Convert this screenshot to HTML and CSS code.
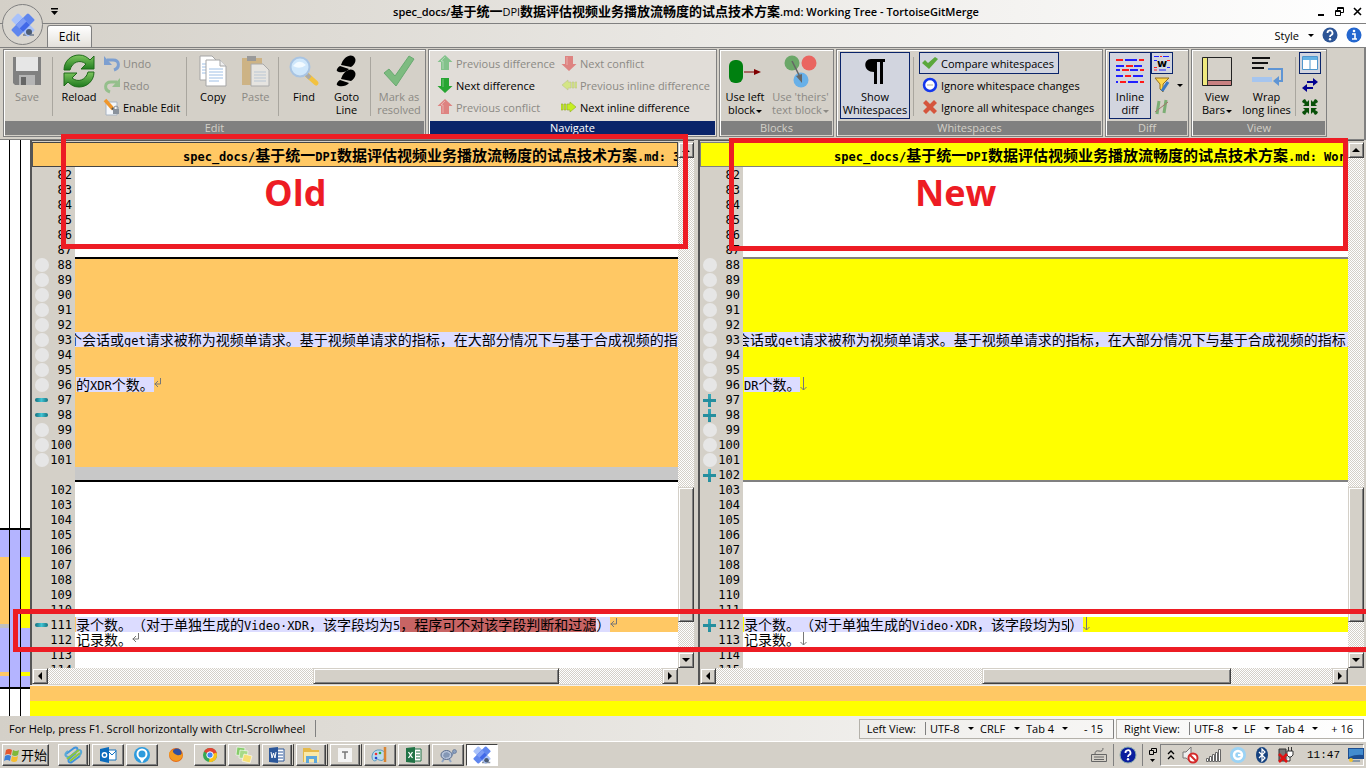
FILE: index.html
```html
<!DOCTYPE html>
<html lang="zh-CN">
<head>
<meta charset="utf-8">
<title>TortoiseGitMerge</title>
<link rel="stylesheet" href="styles.css">
</head>
<body>
<svg class="defs" aria-hidden="true">
  <defs>
    <linearGradient id="green" x1="0" y1="0" x2="0" y2="1"><stop offset="0" stop-color="#7fc65f"/><stop offset="1" stop-color="#1d7a1d"/></linearGradient>
    <symbol id="logo" viewBox="0 0 24 24">
      <circle cx="17" cy="19" r="4" fill="#59687c"/><path d="M12 21h11v2H12z" fill="#8791a0"/>
      <rect x="7" y="0" width="10" height="24" rx="1.500" fill="#5f86ee" transform="rotate(45 12 12)"/>
      <rect x="7" y="0" width="10" height="24" rx="1.500" fill="#a9c2fa" transform="rotate(-45 12 12)"/>
      <path d="M12 5l7 7-7 7-7-7z" fill="#4169e8"/><path d="M12 5l3.500 3.500-7 7L5 12z" fill="#7e9df4"/>
      <circle cx="18" cy="19" r="3" fill="#4c5c74"/>
    </symbol>
    <symbol id="up" viewBox="0 0 16 16"><path d="M8 0l7.500 7H12v8H4V7H.500z" fill="currentColor"/><path d="M8 2L4 6h2v8" fill="none" stroke="#fff" opacity=".35"/></symbol>
    <symbol id="down" viewBox="0 0 16 16"><path d="M8 16L.500 9H4V1h8v8h3.500z" fill="currentColor"/><path d="M6 2v8" fill="none" stroke="#fff" opacity=".35"/></symbol>
    <symbol id="next" viewBox="0 0 16 16"><path d="M0 5h2v6H0zM3 5h2v6H3zM6 5h3V3l6 5-6 5v-2H6z" fill="#c5ef22" stroke="#90a92c" stroke-width=".6"/></symbol>
    <symbol id="page" viewBox="0 0 32 32">
      <path d="M3 1h12l5 5v19H3z" fill="#fff" stroke="#a5a5a5"/><path d="M5 9h8M5 12h8M5 15h8M5 18h8" stroke="#9fc0e6"/>
      <path d="M9 5h14l6 6v20H9z" fill="#fff" stroke="#a5a5a5"/><path d="M23 5v6h6" fill="#eee" stroke="#a5a5a5"/><path d="M12 14h14M12 17h14M12 20h14M12 23h14M12 26h10" stroke="#9fc0e6"/>
    </symbol>
  </defs>
</svg>

<div class="app">
  <header class="titlebar">
    <button class="quick" aria-label="Customize toolbar"><svg width="7" height="8" viewBox="0 0 7 8"><path d="M0 0h7v1.500H0zM0 3h7L3.500 7z"/></svg></button>
    <h1><span class="lat">spec_docs/</span>基于统一<span class="lat thin">DPI</span>数据评估视频业务播放流畅度的试点技术方案<span class="lat">.md: Working Tree - TortoiseGitMerge</span></h1>
    <div class="winbtns">
      <button aria-label="Minimize"><svg width="9" height="9"><path d="M1 7h6v2H1z"/></svg></button>
      <button aria-label="Restore"><svg width="9" height="9" fill="none" stroke="#000"><path d="M2.500 3V.500h6v5H6M2.500 1.500h6M.500 3.500h5v5h-5zM.500 4.500h5"/></svg></button>
      <button aria-label="Close"><svg width="9" height="9" stroke="#000" stroke-width="1.600"><path d="M1 1l7 7M8 1L1 8"/></svg></button>
    </div>
  </header>
  <nav class="tabs">
    <button class="tab">Edit</button>
    <div class="tabtools">
      <button class="style">Style<i class="caret"></i></button>
      <button aria-label="Help"><svg width="16" height="16"><circle cx="8" cy="8" r="7.500" fill="#2d5596"/><path d="M5.500 6a2.500 2.500 0 1 1 3.500 2.200q-1 .5-1 1.800" fill="none" stroke="#fff" stroke-width="1.800"/><circle cx="8" cy="12.300" r="1.200" fill="#fff"/></svg></button>
      <button aria-label="About"><svg width="16" height="16"><circle cx="8" cy="8" r="7.500" fill="#2467cf"/><path d="M6 7h3v5M6 12h5" fill="none" stroke="#fff" stroke-width="1.600"/><circle cx="8" cy="4" r="1.300" fill="#fff"/></svg></button>
    </div>
  </nav>
  <button class="orb" aria-label="Application menu"><svg width="24" height="24"><use href="#logo"/></svg></button>

  <section class="ribbon">
    <div class="group">
      <div class="tools">
        <button class="big w44" disabled><svg width="32" height="32"><path d="M2 2h28v28H4l-2-2z" fill="#808080"/><path d="M5 2h22v14H5z" fill="#e6e6e6"/><path d="M8 20h16v10H8z" fill="#b5b5b5"/><path d="M10 22h5v8h-5z" fill="#666"/></svg>Save</button>
        <i class="sep"></i>
        <button class="big w46"><svg width="32" height="32"><path d="M1 15C1 6 8 0 16 0c5 0 8 2 11 5l4-4v13H18l5-5c-6-5-14-2-16 6z" fill="url(#green)" stroke="#1f6b1a"/><path d="M31 17c0 9-7 15-15 15-5 0-8-2-11-5l-4 4V18h13l-5 5c6 5 14 2 16-6z" fill="url(#green)" stroke="#1f6b1a"/></svg>Reload</button>
        <div class="stack w81">
          <button disabled><svg width="16" height="16"><path d="M3 5h6c7 0 7 8 1 10" fill="none" stroke="#7d9fd0" stroke-width="3"/><path d="M0 1v9h8z" fill="#7d9fd0"/></svg>Undo</button>
          <button disabled><svg width="16" height="16"><path d="M13 5H7C0 5 0 13 6 15" fill="none" stroke="#95bf8c" stroke-width="3"/><path d="M16 1v9H8z" fill="#95bf8c"/></svg>Redo</button>
          <button><svg width="16" height="16"><path d="M2 3h11v13H2z" fill="#f4f7fb" stroke="#a9b4c2"/><path d="M1 1l8 9" stroke="#ef962a" stroke-width="3.500"/><path d="M8 9l3 3" stroke="#555" stroke-width="2"/><rect x="9" y="10" width="6" height="5" fill="#8a929c"/><path d="M10 10V8q2-2 4 0v2" fill="none" stroke="#8a929c"/></svg>Enable Edit</button>
        </div>
        <i class="sep"></i>
        <button class="big w46"><svg width="32" height="32"><use href="#page"/></svg>Copy</button>
        <button class="big w39" disabled><svg width="32" height="32"><path d="M2 3h20v27H2z" fill="#cdb385"/><path d="M7 1h9v5H7z" fill="#999"/><path d="M11 9h12l6 6v16H11z" fill="#e6e4e0" stroke="#aaa"/><path d="M14 17h12M14 20h12M14 23h12M14 26h12" stroke="#b9c6d4"/></svg>Paste</button>
        <i class="sep"></i>
        <button class="big w44"><svg width="32" height="32"><path d="M19 20l9 8" stroke="#f2c240" stroke-width="5" stroke-linecap="round"/><path d="M18 19l4 4" stroke="#aaa" stroke-width="4"/><circle cx="12" cy="12" r="9.500" fill="#cfe7fb" stroke="#a9c4e2" stroke-width="2"/><path d="M5 11q6-8 13-1-6 5-13 1z" fill="#f2faff"/></svg>Find</button>
        <button class="big w41"><svg width="32" height="32"><path d="M10 10C12 3 18-1 22 1c4 2 3 8-2 11z"/><path d="M9 11l9 3c-3 4-10 4-12 2-1-1 1-4 3-5z"/><path d="M10 24c2-7 8-11 12-9 4 2 3 8-2 11z"/><path d="M9 25l9 3c-3 4-10 4-12 2-1-1 1-4 3-5z"/></svg><span>Goto</span><span>Line</span></button>
        <i class="sep"></i>
        <button class="big w50" disabled><svg width="32" height="32"><path d="M1 18l5-4 6 7L26 1l5 3-18 27z" fill="#7dbb80" stroke="#68aa70"/></svg><span>Mark as</span><span>resolved</span></button>
      </div>
      <div class="caption">Edit</div>
    </div>

    <div class="group hot">
      <div class="tools nav">
        <div class="stack w124">
          <button disabled><svg class="lgreen" width="16" height="16"><use href="#up"/></svg>Previous difference</button>
          <button><svg class="green" width="16" height="16"><use href="#down"/></svg>Next difference</button>
          <button disabled><svg class="lred" width="16" height="16"><use href="#up"/></svg>Previous conflict</button>
        </div>
        <div class="stack w156">
          <button disabled><svg class="lred" width="16" height="16"><use href="#down"/></svg>Next conflict</button>
          <button disabled><svg class="faint flip" width="16" height="16"><use href="#next"/></svg>Previous inline difference</button>
          <button><svg width="16" height="16"><use href="#next"/></svg>Next inline difference</button>
        </div>
      </div>
      <div class="caption">Navigate</div>
    </div>

    <div class="group">
      <div class="tools">
        <button class="big w48"><svg width="32" height="32"><rect x="0" y="5" width="14" height="23" rx="6" fill="#008010"/><path d="M15 17h12" stroke="#800000"/><path d="M25 14l7 3-7 3z" fill="#800000"/></svg><span>Use left</span><span>block<i class="caret"></i></span></button>
        <button class="big w63" disabled><svg width="32" height="32"><circle cx="7" cy="8" r="7.500" fill="#6ba768"/><circle cx="24" cy="8" r="7.500" fill="#ea6560"/><circle cx="16" cy="25" r="7.500" fill="#68b0e8"/><path d="M7 6l9 18" stroke="#666" stroke-width="1.500"/><path d="M17 28l-6-7 6-2z" fill="#666"/></svg><span>Use 'theirs'</span><span>text block<i class="caret"></i></span></button>
      </div>
      <div class="caption">Blocks</div>
    </div>

    <div class="group">
      <div class="tools ws">
        <button class="big w70 on"><svg width="32" height="32"><path d="M12 4h14v3h-2v22h-3V7h-3v22h-3V17C4 17 4 4 12 4z"/></svg><span>Show</span><span>Whitespaces</span></button>
        <i class="sep"></i>
        <div class="stack framed">
          <button class="on"><svg width="16" height="16"><path d="M0 8l3-3 3 3 7-6 3 2-9 10z" fill="#5ba83c"/></svg>Compare whitespaces</button>
          <button><svg width="16" height="16"><circle cx="8" cy="8" r="6" fill="#fff" stroke="#1437ec" stroke-width="2.500"/><path d="M5 8h6" stroke="#d9d4cd" stroke-width="2"/></svg>Ignore whitespace changes</button>
          <button><svg width="16" height="16"><path d="M1 4l3-3 4 4 4-4 3 3-4 4 4 4-3 3-4-4-4 4-3-3 4-4z" fill="#d5553d"/></svg>Ignore all whitespace changes</button>
        </div>
      </div>
      <div class="caption">Whitespaces</div>
    </div>

    <div class="group">
      <div class="tools ws">
        <button class="big w42 on"><svg width="32" height="32" stroke-width="2"><path d="M11 5h12M2 11h8M20 11h8M2 15h4M16 15h8M2 21h7M19 21h10M2 27h2M14 27h10" stroke="#2020ff"/><path d="M2 5h7M25 5h5M12 11h7M8 15h7M26 15h4M11 21h6M6 27h6M26 27h4" stroke="#ff1a1a"/></svg><span>Inline</span><span>diff</span></button>
        <div class="stack minis w36">
          <button class="on" aria-label="Inline diff word-wise"><svg width="16" height="16"><path d="M0 1.500h5M9 1.500h6M0 5.500h3M13 12.500h3M5 15h7" stroke="#22f"/><path d="M6 1.500h2M0 12.500h3M13 5.500h3M0 15h3" stroke="#f22"/><text x="8" y="12" text-anchor="middle" class="wglyph">w</text></svg></button>
          <button aria-label="Filter"><svg width="16" height="16"><path d="M1 1h14L9 7v8l-3-3V7z" fill="#ffd84d" stroke="#96711c"/><path d="M14 5l-6 9" stroke="#3b79c5" stroke-width="3"/></svg><i class="caret"></i></button>
          <button aria-label="Moved lines"><svg width="16" height="16"><path d="M5 2L3 15M12 1l-2 13" stroke="#7bae74" stroke-width="3"/><path d="M1 13L14 3" stroke="#a3766d"/></svg></button>
        </div>
      </div>
      <div class="caption">Diff</div>
    </div>

    <div class="group">
      <div class="tools">
        <button class="big w48"><svg width="32" height="32"><path d="M1.500 2.500h29v28h-29z" fill="#d5d1c9" stroke="#222"/><path d="M2 3h4v27H2z" fill="#efe97e"/><path d="M6.500 3v27M7 25.500h23" stroke="#333"/><path d="M7 26h23v4H7z" fill="#c88080"/></svg><span>View</span><span>Bars<i class="caret"></i></span></button>
        <button class="big w51"><svg width="32" height="32"><path d="M1 3h18M1 8h16M1 13h12" stroke="#111" stroke-width="2"/><path d="M17 14h14v12h-6" fill="none" stroke="#5f95d4" stroke-width="2"/><path d="M28 21v10l-6-5z" fill="#5f95d4"/><path d="M1 22h20v5H1z" fill="#a6c5ee"/></svg><span>Wrap</span><span>long lines</span></button>
        <i class="sep"></i>
        <div class="stack minis w26">
          <button class="on" aria-label="Two panes"><svg width="16" height="16"><path d="M.500 1.500h15v13H.500z" fill="#fff" stroke="#4f96cc"/><path d="M1 2h14v3H1z" fill="#64b2e4"/><path d="M8 5v10" stroke="#4f96cc"/></svg></button>
          <button aria-label="Switch views"><svg width="16" height="16"><path d="M5 4h6V1l5 4-5 4V6H5zM11 10H5V7l-5 4 5 4v-3h6z" fill="#000090"/></svg></button>
          <button aria-label="Collapse"><svg width="16" height="16"><path d="M1 1l2-1 2 3 2-2v6H1l2-2-3-2zM15 1l-2-1-2 3-2-2v6h6l-2-2 3-2zM1 15l2 1 2-3 2 2V9H1l2 2-3 2zM15 15l-2 1-2-3-2 2V9h6l-2 2 3 2z" fill="#085008"/></svg></button>
        </div>
      </div>
      <div class="caption">View</div>
    </div>
  </section>

  <main class="main">
    <aside class="locator">
      <div class="lane"><i class="g388"></i><i class="g2 k"></i><i class="g27 p"></i><i class="g67 o"></i><i class="g4 gy"></i><i class="g44 p"></i><i class="g4 o"></i><i class="g11 p"></i><i class="g2 k"></i><i class="g27"></i></div>
      <div class="lane"><i class="g388"></i><i class="g2 k"></i><i class="g157 p"></i><i class="g2 k"></i><i class="g27"></i></div>
      <div class="lane"><i class="g388"></i><i class="g2 k"></i><i class="g27 p"></i><i class="g71 y"></i><i class="g44 p"></i><i class="g4 y"></i><i class="g11 p"></i><i class="g2 k"></i><i class="g27"></i></div>
    </aside>
    <div class="work">
      <div class="panes">
        <section class="pane left">
          <h2><span>spec_docs/</span>基于统一<span>DPI</span>数据评估视频业务播放流畅度的试点技术方案<span>.md: 3</span></h2>
          <div class="lines">
            <div class="row"><b>82</b><code></code></div>
            <div class="row"><b>83</b><code></code></div>
            <div class="row"><b>84</b><code></code></div>
            <div class="row"><b>85</b><code></code></div>
            <div class="row"><b>86</b><code></code></div>
            <div class="row"><b>87</b><code></code></div>
            <div class="row same old first"><b>88</b><code></code></div>
            <div class="row same old"><b>89</b><code></code></div>
            <div class="row same old"><b>90</b><code></code></div>
            <div class="row same old"><b>91</b><code></code></div>
            <div class="row same old"><b>92</b><code></code></div>
            <div class="row same old"><b>93</b><code><mark class="cut">个会话或<span>get</span>请求被称为视频单请求。基于视频单请求的指标，在大部分情况下与基于合成视频的指</mark></code></div>
            <div class="row same old"><b>94</b><code></code></div>
            <div class="row same old"><b>95</b><code></code></div>
            <div class="row same old"><b>96</b><code><mark>的<span>XDR</span>个数。</mark><svg class="eol" width="8" height="12"><path d="M6.500 1v6h-6M4 4L1 7l3 3"/></svg></code></div>
            <div class="row minus old"><b>97</b><code></code></div>
            <div class="row minus old"><b>98</b><code></code></div>
            <div class="row same old"><b>99</b><code></code></div>
            <div class="row same old"><b>100</b><code></code></div>
            <div class="row same old"><b>101</b><code></code></div>
            <div class="row gap last"><b></b><code></code></div>
            <div class="row"><b>102</b><code></code></div>
            <div class="row"><b>103</b><code></code></div>
            <div class="row"><b>104</b><code></code></div>
            <div class="row"><b>105</b><code></code></div>
            <div class="row"><b>106</b><code></code></div>
            <div class="row"><b>107</b><code></code></div>
            <div class="row"><b>108</b><code></code></div>
            <div class="row"><b>109</b><code></code></div>
            <div class="row"><b>110</b><code></code></div>
            <div class="row minus old"><b>111</b><code><mark>录个数。（对于单独生成的<span>Video·XDR</span>，该字段均为<span>5</span></mark><mark class="del">，程序可不对该字段判断和过滤</mark><mark>）</mark><svg class="eol" width="8" height="12"><path d="M6.500 1v6h-6M4 4L1 7l3 3"/></svg></code></div>
            <div class="row"><b>112</b><code>记录数。<svg class="eol" width="8" height="12"><path d="M6.500 1v6h-6M4 4L1 7l3 3"/></svg></code></div>
            <div class="row"><b>113</b><code></code></div>
            <div class="row"><b>114</b><code></code></div>
          </div>
          <div class="bar v"><button aria-label="Scroll up"><i class="tri u"></i></button><i class="track g330"></i><i class="thumb g134"></i><i class="track g30"></i><button aria-label="Scroll down"><i class="tri d"></i></button></div>
          <div class="bar h"><button aria-label="Scroll left"><i class="tri l"></i></button><i class="track g266"></i><i class="thumb g245"></i><i class="track g103"></i><button aria-label="Scroll right"><i class="tri r"></i></button></div>
        </section>
        <section class="pane right">
          <h2><span>spec_docs/</span>基于统一<span>DPI</span>数据评估视频业务播放流畅度的试点技术方案<span>.md: Wor</span></h2>
          <div class="lines">
            <div class="row"><b>82</b><code></code></div>
            <div class="row"><b>83</b><code></code></div>
            <div class="row"><b>84</b><code></code></div>
            <div class="row"><b>85</b><code></code></div>
            <div class="row"><b>86</b><code></code></div>
            <div class="row"><b>87</b><code></code></div>
            <div class="row same new first"><b>88</b><code></code></div>
            <div class="row same new"><b>89</b><code></code></div>
            <div class="row same new"><b>90</b><code></code></div>
            <div class="row same new"><b>91</b><code></code></div>
            <div class="row same new"><b>92</b><code></code></div>
            <div class="row same new"><b>93</b><code><mark class="cut">会话或<span>get</span>请求被称为视频单请求。基于视频单请求的指标，在大部分情况下与基于合成视频的指标，</mark></code></div>
            <div class="row same new"><b>94</b><code></code></div>
            <div class="row same new"><b>95</b><code></code></div>
            <div class="row same new"><b>96</b><code><mark><span>DR</span>个数。</mark><svg class="eol" width="8" height="15"><path d="M3.500 0v13M.500 10l3 3 3-3"/></svg></code></div>
            <div class="row plus new"><b>97</b><code></code></div>
            <div class="row plus new"><b>98</b><code></code></div>
            <div class="row same new"><b>99</b><code></code></div>
            <div class="row same new"><b>100</b><code></code></div>
            <div class="row same new"><b>101</b><code></code></div>
            <div class="row plus new last"><b>102</b><code></code></div>
            <div class="row"><b>103</b><code></code></div>
            <div class="row"><b>104</b><code></code></div>
            <div class="row"><b>105</b><code></code></div>
            <div class="row"><b>106</b><code></code></div>
            <div class="row"><b>107</b><code></code></div>
            <div class="row"><b>108</b><code></code></div>
            <div class="row"><b>109</b><code></code></div>
            <div class="row"><b>110</b><code></code></div>
            <div class="row"><b>111</b><code></code></div>
            <div class="row plus new"><b>112</b><code><mark>录个数。（对于单独生成的<span>Video·XDR</span>，该字段均为<span class="cursor">5</span>）</mark><svg class="eol" width="8" height="15"><path d="M3.500 0v13M.500 10l3 3 3-3"/></svg></code></div>
            <div class="row"><b>113</b><code>记录数。<svg class="eol" width="8" height="15"><path d="M3.500 0v13M.500 10l3 3 3-3"/></svg></code></div>
            <div class="row"><b>114</b><code></code></div>
            <div class="row"><b>115</b><code></code></div>
          </div>
          <div class="bar v"><button aria-label="Scroll up"><i class="tri u"></i></button><i class="track g330"></i><i class="thumb g134"></i><i class="track g30"></i><button aria-label="Scroll down"><i class="tri d"></i></button></div>
          <div class="bar h"><button aria-label="Scroll left"><i class="tri l"></i></button><i class="track g266"></i><i class="thumb g248"></i><i class="track g101"></i><button aria-label="Scroll right"><i class="tri r"></i></button></div>
        </section>
      </div>
      <div class="linebar o"></div>
      <div class="linebar y"></div>
    </div>
  </main>

  <footer class="status">
    <span class="hint">For Help, press F1. Scroll horizontally with Ctrl-Scrollwheel</span>
    <div class="fields">
      <span class="name">Left View:</span>
      <label class="drop"><select class="w50" aria-label="Left encoding"><option>UTF-8</option></select></label>
      <label class="drop"><select class="w46" aria-label="Left line ending"><option>CRLF</option></select></label>
      <label class="drop"><select class="w48" aria-label="Left tab size"><option>Tab 4</option></select></label>
      <span class="count">- 15</span>
    </div>
    <div class="fields">
      <span class="name">Right View:</span>
      <label class="drop"><select class="w50" aria-label="Right encoding"><option>UTF-8</option></select></label>
      <label class="drop"><select class="w32" aria-label="Right line ending"><option>LF</option></select></label>
      <label class="drop"><select class="w48" aria-label="Right tab size"><option>Tab 4</option></select></label>
      <span class="count">+ 16</span>
    </div>
  </footer>

  <div class="taskbar">
    <button class="task start"><svg width="16" height="16"><path d="M2 3q3-2 6 0L7 8q-3-2-6 0z" fill="#e4572e"/><path d="M9 3q3 2 6 0l-1 5q-3 2-6 0z" fill="#7fb83b"/><path d="M1 9q3-2 6 0l-1 5q-3-2-6 0z" fill="#3c7fd6"/><path d="M8 9q3 2 6 0l-1 5q-3 2-6 0z" fill="#f6bd2f"/></svg>开始</button>
    <button class="task multi" aria-label="China Mobile"><svg width="18" height="18" fill="none" stroke-width="2"><path d="M2 8l8-6q2-1 3 0t0 3L6 11M16 10l-8 6q-2 1-3 0t0-3l7-6" stroke="#3f93dc"/><path d="M4 5q-4 3-2 5t5 0l6-5q3-2 4 0t-2 5" stroke="#59a9d8"/><path d="M3 13L15 4M6 15l10-8" stroke="#8cc63f"/></svg></button>
    <button class="task" aria-label="Outlook"><svg width="18" height="18"><path d="M9 4h8v10H9z" fill="#fff" stroke="#1272c0"/><path d="M9 5l4 4 4-4" fill="none" stroke="#1272c0"/><path d="M1 3l9-2v16l-9-2z" fill="#0b6cbd"/><circle cx="5.500" cy="9" r="2.200" fill="none" stroke="#fff" stroke-width="1.400"/></svg></button>
    <button class="task" aria-label="Browser"><svg width="18" height="18"><circle cx="9" cy="9" r="8" fill="#2d9bdd"/><circle cx="9" cy="8" r="4.500" fill="none" stroke="#fff" stroke-width="2"/><path d="M6 12l3 5 3-5z" fill="#fff"/></svg></button>
    <button class="task flat" aria-label="Firefox"><svg width="18" height="18"><circle cx="9" cy="9" r="7" fill="#e56b19"/><circle cx="10" cy="7" r="4.500" fill="#32509d"/><path d="M2 7q2-3 4-3-1 3 4 5 3 1 6-2-1 8-7 8-7-1-7-8z" fill="#f39a1f"/></svg></button>
    <button class="task" aria-label="Chrome"><svg width="18" height="18"><circle cx="9" cy="9" r="7" fill="#35a753"/><path d="M9 9L3 5.500A7 7 0 0 1 16 8z" fill="#e24234"/><path d="M9 9l6.500-2.500A7 7 0 0 1 8 16z" fill="#fbc116"/><circle cx="9" cy="9" r="3.200" fill="#4285f4" stroke="#fff"/></svg></button>
    <button class="task" aria-label="Notes"><svg width="18" height="18" stroke="#fff" stroke-width=".6"><path d="M2 1l8 1-1 8-8-1z" fill="#86cc6a"/><path d="M5 4l8 1-1 8-8-1z" fill="#a6da88"/><path d="M9 8l8 2-2 7-8-2z" fill="#f6df72"/></svg></button>
    <button class="task multi" aria-label="Word"><svg width="18" height="18"><path d="M8 3h8v12H8z" fill="#fff" stroke="#2b579a"/><path d="M10 6h5M10 9h5M10 12h5" stroke="#2b579a"/><path d="M1 2l9-1v16l-9-1z" fill="#2b579a"/><path d="M3 6l1 6 1.500-5L7 12l1-6" fill="none" stroke="#fff"/></svg></button>
    <button class="task multi" aria-label="Explorer"><svg width="18" height="18"><path d="M1 2h7l2 2h7v12H1z" fill="#e5b94a"/><path d="M2 6h15v10H2z" fill="#f9e8a8"/><path d="M4 17v-7h11v7h-3v-4H7v4z" fill="#5da7dc"/></svg></button>
    <button class="task multi" aria-label="Typora"><svg width="18" height="18"><path d="M2 2h14v14H2z" fill="#f4f4f4"/><path d="M6 6h6M9 6v7" stroke="#777" stroke-width="1.500"/></svg></button>
    <button class="task" aria-label="Paint"><svg width="18" height="18"><path d="M1 10q1-7 9-6 6 2 4 8-3 4-6 2-1-2-4 1-3 0-3-5z" fill="#b8dcf0" stroke="#5d9cc2"/><circle cx="5" cy="8" r="1.300" fill="#e33"/><circle cx="9" cy="7" r="1.300" fill="#3a3"/><circle cx="5" cy="12" r="1.300" fill="#24c"/><path d="M14 1v15" stroke="#d98432" stroke-width="2.500"/></svg></button>
    <button class="task" aria-label="Excel"><svg width="18" height="18"><path d="M8 3h8v12H8z" fill="#fff" stroke="#217346"/><path d="M11 6h4M11 9h4M11 12h4" stroke="#217346"/><path d="M1 2l9-1v16l-9-1z" fill="#217346"/><path d="M3.500 6l4 6M7.500 6l-4 6" stroke="#fff" stroke-width="1.300"/></svg></button>
    <button class="task" aria-label="TortoiseGit"><svg width="18" height="18"><path d="M5 13l-2 3M10 13l2 3M12 10l3-4" stroke="#8ea4c4" stroke-width="2"/><ellipse cx="7.500" cy="9" rx="5.500" ry="4.500" fill="#b7c4da" stroke="#596c8c"/><path d="M5 7l3-1 3 2-1 3-4 1-2-2z" fill="#8497b5"/><circle cx="15.500" cy="5.500" r="2" fill="#8aa0bf" stroke="#596c8c" stroke-width=".6"/></svg></button>
    <button class="task active" aria-label="TortoiseGitMerge"><svg width="18" height="18"><use href="#logo"/></svg></button>

    <div class="tray0">
      <svg width="18" height="18" fill="none" stroke="#666"><path d="M1.500 8.500h15v7h-15zM4 11h10M4 13.500h10M5 8q0-4 4-3t4-3"/></svg>
      <i class="vsep"></i>
      <svg width="18" height="18"><circle cx="9" cy="9" r="8" fill="#0b1f9e" stroke="#8aa"/><path d="M6.500 7a2.500 2.500 0 1 1 3.500 2q-1 .6-1 2" fill="none" stroke="#fff" stroke-width="1.800"/><circle cx="9" cy="13.300" r="1.200" fill="#fff"/></svg>
      <i class="vsep"></i>
      <svg width="10" height="16"><path d="M3.500 3V1.500h5v4H6M1.500 3.500h4v4h-4z" fill="none" stroke="#000"/><path d="M2 12h5l-2.500 3z"/></svg>
    </div>
    <div class="tray">
      <svg width="8" height="10" fill="none" stroke="#000" stroke-width="1.300"><path d="M1 4l3-3 3 3M1 9l3-3 3 3"/></svg>
      <svg width="18" height="18"><path d="M2 6h3l5-5v15l-5-4H2z" fill="#eee" stroke="#777"/><circle cx="12" cy="12" r="4.500" fill="#fff" stroke="#d42a2a" stroke-width="2"/><path d="M9 9l6 6" stroke="#d42a2a" stroke-width="2"/></svg>
      <svg width="18" height="18" fill="#fff" stroke="#666"><path d="M1.500 12.500h2v3h-2zM4.500 10.500h2v5h-2zM7.500 8.500h2v7h-2zM10.500 6.500h2v9h-2zM13.500 3.500h2v12h-2z"/></svg>
      <svg width="18" height="18"><circle cx="9" cy="9" r="8" fill="#9bd3f5"/><circle cx="9" cy="9" r="4" fill="none" stroke="#fff" stroke-width="2.500"/><path d="M9 9h5" stroke="#fff" stroke-width="2"/></svg>
      <svg width="18" height="18"><ellipse cx="9" cy="9" rx="6" ry="8" fill="#16427f"/><path d="M6 6l6 6-3 3V3l3 3-6 6" fill="none" stroke="#fff" stroke-width="1.200"/></svg>
      <svg width="18" height="18"><path d="M2 3h7v12H2z" fill="#777" stroke="#333"/><path d="M10 5h6v4l-2 2h-2l-2-2zM13 11v4H9" fill="#fff" stroke="#333"/><path d="M2 8l8 8M10 8l-8 8" stroke="#e01212" stroke-width="2.500"/><path d="M11.500 1v4M14.500 1v4" stroke="#333"/></svg>
      <time>11:47</time>
      <svg width="16" height="14"><path d="M0 0h16v11H0z" fill="#1c4d90"/><path d="M1 1h14v6q-7-1-14 2z" fill="#438cce"/><path d="M4 12h8v2H4z" fill="#89a"/><circle cx="3" cy="12" r="2" fill="#f0c330"/></svg>
    </div>
  </div>

  <div class="note box1"></div>
  <div class="note box2"></div>
  <div class="note box3"></div>
  <div class="word old-word">Old</div>
  <div class="word new-word">New</div>
</div>
</body>
</html>
```

FILE: styles.css
```css
* { box-sizing: border-box; }
body {
  margin: 0;
  background: #d4d0c8;
  color: #000;
  font: 11px/13px "Open Sans", "Noto Sans", "Noto Sans CJK SC", sans-serif;
  text-spacing-trim: space-all;
}
button, select {
  font: inherit; color: inherit; background: none; border: 0; padding: 0; margin: 0;
}
h1, h2 { margin: 0; }
svg { display: block; flex: none; overflow: visible; }
.defs { position: absolute; width: 0; height: 0; }
.app { position: relative; display: flex; flex-direction: column; min-height: 100vh; overflow: hidden; }

/* title bar and tabs */
.titlebar {
  display: flex; align-items: center; height: 24px; padding: 0 4px 0 51px;
  background: linear-gradient(90deg, #d4d0c8, #fff);
  border-bottom: 1px solid #808080;
}
.quick { width: 8px; }
h1 { flex: 1; text-align: center; font: bold 13px/20px "Noto Sans CJK SC", sans-serif; white-space: nowrap; padding-right: 4px; }
.lat { font: 600 11px/20px "Open Sans", sans-serif; }
.thin { font-weight: normal; }
.winbtns { display: flex; gap: 9px; }
.tabs {
  display: flex; align-items: flex-end; justify-content: space-between; height: 24px; padding: 0 4px 0 47px;
  background: linear-gradient(90deg, #d4d0c8, #fff);
  border-bottom: 1px solid #808080;
}
.tab {
  width: 45px; height: 22px; border: 1px solid #808080; border-bottom: 0; border-radius: 3px 3px 0 0;
  background: linear-gradient(#fff, #e4e1db); font-size: 12px;
}
.tabtools { display: flex; align-items: center; gap: 8px; height: 24px; }
.style { display: flex; align-items: center; gap: 8px; }
.caret {
  display: inline-block; flex: none; border: 3px solid transparent; border-top-color: currentColor; border-bottom: 0;
  vertical-align: middle; margin-left: 1px;
}
.orb {
  position: absolute; left: 2px; top: 4px; width: 41px; height: 41px; border-radius: 50%;
  border: 1px solid #808080; background: #d9d6cf; display: grid; place-items: center;
}

/* ribbon */
.ribbon { display: flex; gap: 2px; height: 92px; padding: 1px 0 2px 3px; border-right: 2px solid #808080; border-bottom: 1px solid #808080; }
.group {
  display: flex; flex-direction: column; border: 1px solid #808080; box-shadow: inset 1px 1px #fff;
  padding: 2px 1px 0; flex: none;
}
.hot { background: #e1ddd8; }
.tools { display: flex; flex: 1; height: 68px; }
.nav { padding: 0 0 0 5px; }
.ws { padding-left: 2px; }
.caption { height: 14px; background: #808080; color: #d4d0c8; text-align: center; line-height: 14px; margin-bottom: 1px; }
.hot .caption { background: #0a246a; color: #fff; }
.big {
  display: flex; flex-direction: column; align-items: center; height: 67px; padding-top: 2px;
  white-space: nowrap; line-height: 13px; border: 1px solid transparent;
}
.big svg { margin-bottom: 3px; }
button:disabled { color: #8b8984; }
.sep { width: 1px; margin: 5px 3px; background: #a9a69f; flex: none; }
.stack { display: flex; flex-direction: column; }
.stack button { display: flex; align-items: center; gap: 3px; height: 22px; white-space: nowrap; border: 1px solid transparent; padding: 0 1px; }
.framed { margin-left: 2px; align-items: flex-start; width: 182px; }
.framed button { padding: 0 4px 0 2px; gap: 3px; }
.minis button { padding: 0 2px; gap: 6px; align-self: flex-start; }
.big.on, .stack .on { border-color: #0a246a; background: #d2d5df; }
.wglyph { font: bold 11px "DejaVu Sans", sans-serif; }
.flip { transform: scaleX(-1); }
.faint { opacity: .45; }
.lgreen { color: #83c28b; }
.green { color: #27a532; }
.lred { color: #de8381; }
.w26 { width: 26px; }
.w32 { width: 32px; }
.w36 { width: 36px; }
.w39 { width: 39px; }
.w41 { width: 41px; }
.w42 { width: 42px; }
.w44 { width: 44px; }
.w46 { width: 46px; }
.w48 { width: 48px; }
.w50 { width: 50px; }
.w51 { width: 51px; }
.w63 { width: 63px; }
.w70 { width: 70px; }
.w81 { width: 81px; }
.w124 { width: 124px; }
.w156 { width: 156px; }

/* segment lengths */
.g2 { flex: 2; } .g4 { flex: 4; } .g11 { flex: 11; } .g27 { flex: 27; } .g30 { flex: 30; }
.g44 { flex: 44; } .g67 { flex: 67; } .g71 { flex: 71; } .g101 { flex: 101; } .g103 { flex: 103; }
.g134 { flex: 134; } .g157 { flex: 157; } .g245 { flex: 245; } .g248 { flex: 248; } .g266 { flex: 266; }
.g330 { flex: 330; } .g388 { flex: 388; }
.o { background: #ffc864; }
.y { background: #ff0; }
.p { background: #b4b4ff; }
.k { background: #000; }
.gy { background: #c0c0c0; }

/* comparison area */
.main { flex: 1; display: flex; background: #fff; }
.locator { display: flex; width: 30px; flex: none; }
.lane { flex: 1; display: flex; flex-direction: column; }
.lane + .lane { border-left: 1px solid #000; }
.work { flex: 1; display: flex; flex-direction: column; min-width: 0; }
.panes { flex: 1; display: flex; gap: 4px; background: #d4d0c8; padding-right: 2px; border-bottom: 1px solid #f4f2ee; }
.pane {
  display: grid; grid-template: 26px 1fr 16px / minmax(0, 1fr) 16px; min-width: 0;
  border-left: 2px solid #555; border-top: 1px solid #555; padding-bottom: 1px;
}
.pane.left { flex: 664; }
.pane.right { flex: 666; }
h2 {
  background: #ffc864; border: 1px solid #444; border-left-color: #555; margin-top: 1px;
  font: bold 15px/24px "Noto Sans CJK SC", sans-serif; white-space: nowrap; overflow: hidden; padding-left: 150px;
}
.right h2 { background: #ff0; padding-left: 133px; border-color: #808080; }
h2 span { font: bold 12px/24px "DejaVu Sans Mono", monospace; }
.lines { background: #fff; overflow: hidden; contain: size; }
.row { display: flex; height: 15px; }
.row b {
  width: 43px; flex: none; display: flex; align-items: center; justify-content: space-between;
  padding: 1px 3px 0; background: #d4d0c8; font: 12px/15px "DejaVu Sans Mono", monospace;
}
.row b::before { content: ""; width: 14px; height: 14px; margin-right: auto; flex: none; }
.same b::before { border-radius: 50%; background: #e6e6e6; }
.minus b::before { width: 13px; height: 4px; border-radius: 2px; background: linear-gradient(90deg, #146f7c, #42c4d4, #146f7c); }
.plus b::before {
  width: 13px; height: 13px;
  background: linear-gradient(#258e9e, #258e9e) center / 13px 3px no-repeat, linear-gradient(#35a9ba, #258e9e) center / 3px 13px no-repeat;
}
.row code {
  flex: 1; min-width: 0; display: flex; overflow: hidden; white-space: nowrap; padding-left: 1px;
  font: 14px/15px "Noto Sans CJK SC", sans-serif;
}
code span { font: 12px/15px "DejaVu Sans Mono", monospace; }
.old code { background: #ffc864; }
.new code { background: #ff0; }
.gap code { background: #c8c8c8; }
.first code { border-top: 2px solid #000; }
.last code { border-bottom: 2px solid #000; }
.right .first code, .right .last code { border-color: #808080; }
mark { background: #dcdcff; color: #000; flex: none; }
.cut { margin-left: -8px; }
.del { background: #c86464; }
.cursor { border-right: 1px solid #000; }
.eol { fill: none; stroke: #777; }

/* scroll bars */
.bar { display: flex; }
.v { flex-direction: column; grid-area: 1 / 2 / 3 / 3; padding-top: 1px; }
.h { grid-area: 3 / 1; }
.bar button, .thumb {
  background: #d4d0c8; border: 1px solid; border-color: #d4d0c8 #404040 #404040 #d4d0c8;
  box-shadow: inset 1px 1px #fff, inset -1px -1px #808080;
}
.bar button { width: 16px; height: 16px; display: grid; place-items: center; flex: none; }
.track { background: repeating-conic-gradient(#fff 0 25%, #d4d0c8 0 50%) 0 0 / 2px 2px; }
.tri { border: 4px solid transparent; }
.u { border-bottom-color: #000; border-top: 0; }
.d { border-top-color: #000; border-bottom: 0; }
.l { border-right-color: #000; border-left: 0; }
.r { border-left-color: #000; border-right: 0; }
.linebar { height: 15px; }

/* status bar */
.status {
  display: flex; align-items: center; gap: 2px; height: 26px; padding-right: 2px;
  background: linear-gradient(90deg, #d4d0c8, #fff); border-bottom: 1px solid #fff;
}
.hint { padding: 2px 10px 2px 9px; border-right: 1px solid #808080; margin-right: auto; }
.fields { display: flex; align-items: center; height: 20px; border: 1px solid #b4b1aa; border-right-color: #808080; padding: 0 10px 0 7px; }
.name { padding-right: 9px; border-right: 1px solid #808080; margin-right: 4px; }
.drop { position: relative; }
.drop select { appearance: none; display: block; }
.drop::after {
  content: ""; position: absolute; right: 6px; top: 5px;
  border: 3px solid transparent; border-top-color: #000; border-bottom: 0;
}
.count { width: 29px; text-align: right; }

/* task bar */
.taskbar { display: flex; align-items: center; gap: 2px; height: 26px; padding: 0 2px; background: #d4d0c8; }
.task {
  display: flex; align-items: center; justify-content: center; width: 32px; height: 22px;
  border: 1px solid; border-color: #fff #404040 #404040 #fff; box-shadow: inset -1px -1px #808080;
}
.start { width: 47px; margin-right: 7px; font: 13px/18px "Noto Sans CJK SC", sans-serif; gap: 1px; }
.multi { border-right: 3px double #404040; }
.flat { border-color: transparent; box-shadow: none; }
.active { background: #fff; border-color: #404040 #fff #fff #404040; box-shadow: none; }
.tray0 { display: flex; align-items: center; gap: 5px; margin-left: auto; }
.vsep { width: 1px; height: 22px; background: #808080; }
.tray {
  display: flex; align-items: center; gap: 6px; height: 22px; width: 204px; justify-content: space-between;
  padding: 0 1px 0 6px; border: 1px solid; border-color: #808080 #fff #fff #808080;
}
.tray time { font: 11px/18px "Liberation Mono", monospace; padding: 0 2px 0 6px; }

/* marker annotations */
.note { position: absolute; border: 5px solid #ed1c24; pointer-events: none; }
.box1 { left: 61px; right: 678px; top: 134px; height: 115px; }
.box2 { left: 729px; right: 18px; top: 138px; height: 113px; }
.box3 { left: 13px; right: 0; top: 609px; height: 43px; border-right: 0; }
.word { position: absolute; top: 168px; color: #ed1c24; font: bold 36px/50px "Open Sans", sans-serif; }
.old-word { left: 264px; }
.new-word { left: 915px; }
```
